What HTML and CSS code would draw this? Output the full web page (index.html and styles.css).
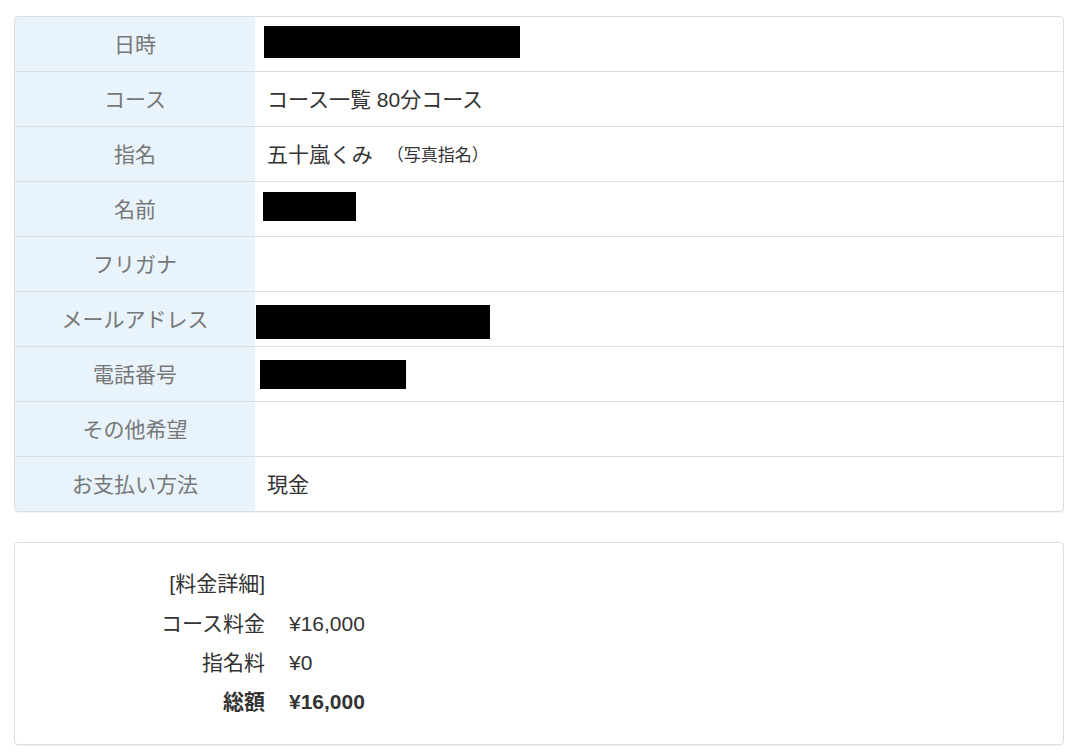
FILE: index.html
```html
<!DOCTYPE html>
<html lang="ja">
<head>
    <meta charset="utf-8">
    <meta name="viewport" content="width=device-width, initial-scale=1">
    <title>予約確認</title>
    <link rel="stylesheet" href="styles.css">
</head>
<body>
<div class="wrap">
    <div class="panel">
        <div class="row">
            <div class="label">日時</div>
            <div class="value"><span class="mask mask-date"></span></div>
        </div>
        <div class="row">
            <div class="label">コース</div>
            <div class="value">コース一覧 80分コース</div>
        </div>
        <div class="row">
            <div class="label">指名</div>
            <div class="value">五十嵐くみ <small class="note">（写真指名）</small></div>
        </div>
        <div class="row">
            <div class="label">名前</div>
            <div class="value"><span class="mask mask-name"></span></div>
        </div>
        <div class="row">
            <div class="label">フリガナ</div>
            <div class="value"></div>
        </div>
        <div class="row">
            <div class="label">メールアドレス</div>
            <div class="value"><span class="mask mask-mail"></span></div>
        </div>
        <div class="row">
            <div class="label">電話番号</div>
            <div class="value"><span class="mask mask-tel"></span></div>
        </div>
        <div class="row">
            <div class="label">その他希望</div>
            <div class="value"></div>
        </div>
        <div class="row">
            <div class="label">お支払い方法</div>
            <div class="value">現金</div>
        </div>
    </div>

    <div class="panel price">
        <div class="price-head">[料金詳細]</div>
        <div></div>
        <div class="price-label">コース料金</div>
        <div>¥16,000</div>
        <div class="price-label">指名料</div>
        <div>¥0</div>
        <div class="price-label total">総額</div>
        <div class="total">¥16,000</div>
    </div>
</div>
</body>
</html>
```

FILE: styles.css
```css
html, body {
    margin: 0;
    padding: 0;
    background: white;
}

body {
    font-family: "Liberation Sans", "Noto Sans CJK JP", sans-serif;
    font-size: 21px;
    color: #333;
}

.wrap {
    padding: 16px 19px 10px 14px;
}

.panel {
    border: 1px solid #dddddd;
    border-radius: 4px;
    box-shadow: 0 1px 1px rgba(0, 0, 0, .05);
    overflow: hidden;
    margin-bottom: 30px;
}

.row {
    display: flex;
    height: 54px;
    border-top: 1px solid #dddddd;
}

.row:first-child {
    border-top: none;
}

.label {
    width: 240px;
    flex-shrink: 0;
    background: #e8f3fc;
    color: #777;
    display: flex;
    align-items: center;
    justify-content: center;
    padding-bottom: 2px;
}

.value {
    flex: 1;
    display: flex;
    align-items: center;
    padding-left: 12px;
    padding-bottom: 2px;
}

.note {
    font-size: 17px;
    margin-left: 14px;
}

.mask {
    display: block;
    background: black;
}

.mask-date {
    width: 256px;
    height: 32px;
    margin-left: -3px;
    margin-top: -2px;
}

.mask-name {
    width: 93px;
    height: 29px;
    margin-left: -4px;
    margin-top: -4px;
}

.mask-mail {
    width: 234px;
    height: 34px;
    margin-left: -11px;
    margin-top: 8px;
}

.mask-tel {
    width: 146px;
    height: 29px;
    margin-left: -7px;
    margin-top: 2px;
}

.price {
    display: grid;
    grid-template-columns: 250px auto;
    column-gap: 24px;
    row-gap: 0;
    padding: 21px 0 23px 0;
    line-height: 39px;
}

.price-head, .price-label {
    text-align: right;
}

.price-head {
    margin-bottom: 1px;
}

.total {
    font-weight: bold;
}
```
